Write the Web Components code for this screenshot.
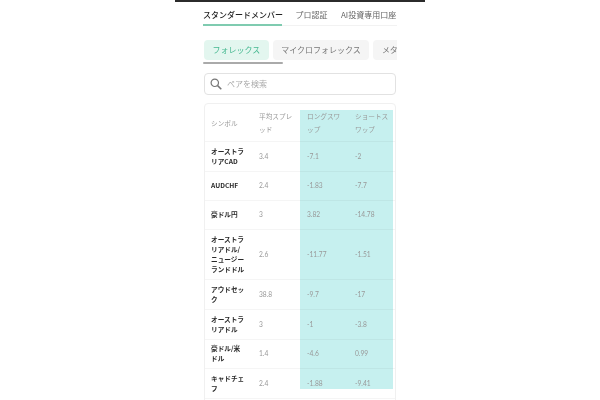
<!DOCTYPE html>
<html lang="ja"><head><meta charset="utf-8">
<style>
html,body{margin:0;padding:0;background:#fff;height:400px;overflow:hidden}
body{font-family:"Noto Sans CJK JP","Noto Sans",sans-serif;display:flex;justify-content:center}
</style></head><body>
<fx-page>
  <fx-tabs slot="tabs"></fx-tabs>
  <fx-pills slot="pills"></fx-pills>
  <fx-search slot="search"></fx-search>
  <fx-table slot="table"></fx-table>
</fx-page>
<script>
const sh=(el,html)=>{el.attachShadow({mode:'open'}).innerHTML=html};
customElements.define('fx-page',class extends HTMLElement{constructor(){super();sh(this,`<style>
:host{display:block;width:250px;height:400px;box-sizing:border-box;border-top:2px solid #2b2b2b;padding:0 28px;background:#fff;overflow:hidden;filter:blur(.4px)}
.w{display:flex;flex-direction:column}
</style><div class="w"><slot name="tabs"></slot><slot name="pills"></slot><slot name="search"></slot><slot name="table"></slot></div>`)}});
customElements.define('fx-tabs',class extends HTMLElement{constructor(){super();sh(this,`<style>
:host{display:flex;height:24px;box-sizing:border-box;border-bottom:1px solid #f2f2f2;font-size:8px;line-height:13px;white-space:nowrap;color:#666;gap:13.5px}
span{padding-top:6px;height:16px}
.a{color:#222;font-weight:500;border-bottom:2px solid #7fcbb0;width:79px}
</style><span class="a">スタンダードメンバー</span><span>プロ認証</span><span>AI投資専用口座</span>`)}});
customElements.define('fx-pills',class extends HTMLElement{constructor(){super();sh(this,`<style>
:host{display:block;margin-top:14px;width:194px;height:24px;position:relative;overflow:hidden}
.r{display:flex;gap:4px;white-space:nowrap;font-size:8px;line-height:19px;padding-left:1px}
span{height:20px;padding:0 8.5px;border-radius:4px;background:#f5f5f5;color:#777;flex:none}
.a{background:#e3f6ef;color:#45b890}
.b{position:absolute;left:0;top:22px;width:80px;height:2px;background:#aaa;border-radius:1px}
</style><div class="r"><span class="a">フォレックス</span><span>マイクロフォレックス</span><span>メタル</span></div><div class="b"></div>`)}});
customElements.define('fx-search',class extends HTMLElement{constructor(){super();sh(this,`<style>
:host{display:flex;align-items:center;gap:4px;margin:9px 1px 0;width:192px;height:22px;box-sizing:border-box;border:1px solid #e2e2e2;border-radius:4px;padding:0 5px 1px;font-size:8px;color:#aaa}
svg{display:block;flex:none}
</style><svg width="12" height="12" viewBox="0 0 12 12" fill="none" stroke="#777" stroke-width="1.2"><circle cx="4.8" cy="4.8" r="3.7"/><path d="M7.6 7.6 11.3 11.3" stroke-width="1.5"/></svg><span style="margin-left:1px">ペアを検索</span>`)}});
const data=[
['オーストラリアCAD','3.4','-7.1','-2',30],
['AUDCHF','2.4','-1.83','-7.7',29],
['豪ドル円','3','3.82','-14.78',29],
['オーストラリアドル/ニュージーランドドル','2.6','-11.77','-1.51',50],
['アウドセック','38.8','-9.7','-17',30],
['オーストラリアドル','3','-1','-3.8',30],
['豪ドル/米ドル','1.4','-4.6','0.99',29],
['キャドチェフ','2.4','-1.88','-9.41',30]];
customElements.define('fx-table',class extends HTMLElement{constructor(){super();
const rows=data.map(d=>`<div class="row" style="height:${d[4]}px"><b>${d[0]}</b><span class="n">${d[1]}</span><span class="n">${d[2]}</span><span class="n">${d[3]}</span></div>`).join('');
sh(this,`<style>
:host{display:block;margin:8px 1px 0;width:192px;height:400px;box-sizing:border-box;border:1px solid #f0f0f0;border-radius:4px;position:relative;overflow:hidden;font-size:6.67px;color:#999}
.teal{position:absolute;left:95px;top:6px;width:93px;height:279px;background:#c6f0ef}
.t{position:relative;padding-top:6px}
.row{display:grid;grid-template-columns:48px 48px 48px 48px;padding:0 0 2px 6px;box-sizing:border-box;align-items:center;border-bottom:1px solid rgba(0,0,0,.04);line-height:10px}
.row>*{padding-right:13px;min-width:0}
b{color:#2a2a2a;font-weight:700;line-height:10px;word-break:break-all}
.n{font-family:Lato,"Noto Sans",sans-serif}
.h{height:32px;line-height:13.3px;padding-bottom:5px}
.h span{word-break:break-all}
</style><div class="teal"></div><div class="t"><div class="row h"><span>シンボル</span><span>平均スプレッド</span><span>ロングスワップ</span><span>ショートスワップ</span></div>${rows}</div>`)}});
</script></body></html>
